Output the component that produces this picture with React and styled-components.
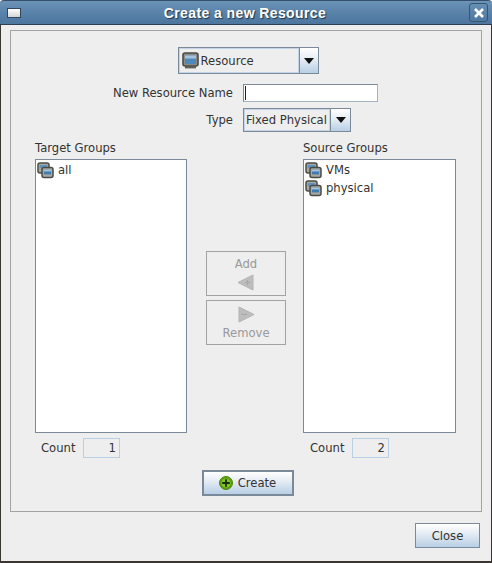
import React from "react"
import styled, { createGlobalStyle } from "styled-components"

const GlobalStyle = createGlobalStyle`
  html, body {
    margin: 0;
    padding: 0;
    background: #eeeeee;
  }
  body {
    font-family: "DejaVu Sans", sans-serif;
    font-size: 11.6px;
    color: #333333;
  }
`
const Window = styled.div`
  width: 492px;
  height: 563px;
  display: flex;
  flex-direction: column;
  background: #eeeeee;
  overflow: hidden;
  border-bottom: 2px solid #3a3733;
  box-sizing: border-box;
`
const TitleBar = styled.div`
  height: 25px;
  flex: none;
  box-sizing: border-box;
  display: flex;
  align-items: center;
  justify-content: space-between;
  padding: 0 4px 0 7px;
  background: linear-gradient(#6c93b8 0%, #5a83aa 50%, #4c769e 100%);
  border-top: 1px solid #35506c;
  border-bottom: 1px solid #2c3e50;
  border-radius: 4px 4px 0 0;
`
const MenuBox = styled.div`
  width: 12px;
  height: 8px;
  background: linear-gradient(#ffffff, #d4d4d4);
  border: 1px solid #2f4860;
`
const Title = styled.div`
  flex: 1;
  text-align: center;
  font-family: "Liberation Sans", Arial, sans-serif;
  font-weight: bold;
  font-size: 14px;
  letter-spacing: 0.4px;
  color: #ffffff;
  text-shadow: 1px 1px 1px #1f3245;
`
const CloseBox = styled.div`
  width: 19px;
  height: 19px;
  border: 1px solid #36556f;
  border-radius: 3px;
  display: flex;
  align-items: center;
  justify-content: center;
  box-sizing: border-box;
`
const Content = styled.div`
  flex: 1;
  display: flex;
  flex-direction: column;
  padding: 5px 9px 0;
  border-left: 1px solid #3a3733;
  border-right: 1px solid #3a3733;
`
const Panel = styled.div`
  height: 482px;
  box-sizing: border-box;
  border: 1px solid #a3a3a3;
  padding: 16px 24px 0;
  display: flex;
  flex-direction: column;
  align-items: stretch;
`
const TopCombo = styled.div`
  align-self: center;
  display: flex;
  width: 141px;
  height: 27px;
  box-sizing: border-box;
  border: 1px solid #7a8a99;
  margin-left: 4px;
`
const ComboValue = styled.div`
  flex: 1;
  display: flex;
  align-items: center;
  gap: 2px;
  padding-left: ${p => p.$pad}px;
  background: #eeeeee;
  border: 1px solid #c2d4e6;
  color: #333333;
  white-space: nowrap;
`
const ComboArrow = styled.div`
  width: ${p => p.$w}px;
  flex: none;
  display: flex;
  align-items: center;
  justify-content: center;
  border-left: 1px solid #7a8a99;
  background: linear-gradient(#ffffff 0%, #e6edf4 45%, #b8cfe5 100%);
`
const FormGrid = styled.div`
  display: grid;
  grid-template-columns: 198px 1fr;
  column-gap: 10px;
  margin-top: 10px;
  align-items: center;
  row-gap: 6px;
`
const FieldLabel = styled.div`
  text-align: right;
  color: #333333;
`
const TextInput = styled.div`
  width: 135px;
  height: 18px;
  box-sizing: border-box;
  background: #ffffff;
  border: 1px solid #a3b3c2;
  border-top-color: #7a8a99;
  border-left-color: #7a8a99;
  display: flex;
  align-items: center;
  padding-left: 1px;
`
const Caret = styled.div`
  width: 1px;
  height: 14px;
  background: #222222;
`
const TypeCombo = styled.div`
  display: flex;
  width: 108px;
  height: 24px;
  box-sizing: border-box;
  border: 1px solid #7a8a99;
`
const Columns = styled.div`
  display: grid;
  grid-template-columns: 152px 1fr 153px;
  margin-top: 8px;
  margin-right: 1px;
`
const GroupColumn = styled.div`
  display: flex;
  flex-direction: column;
`
const GroupLabel = styled.div`
  height: 19px;
  line-height: 16px;
  color: #333333;
`
const ListBox = styled.div`
  height: 274px;
  box-sizing: border-box;
  background: #ffffff;
  border: 1px solid #7a8a99;
  padding: 1px;
`
const ListRow = styled.div`
  height: 18px;
  display: flex;
  align-items: center;
  gap: 4px;
  color: #333333;
`
const CountRow = styled.div`
  display: flex;
  align-items: center;
  margin-top: 5px;
  padding-left: ${p => p.$pad}px;
  height: 20px;
`
const CountLabel = styled.div`
  width: 42px;
`
const CountBox = styled.div`
  width: 37px;
  height: 20px;
  box-sizing: border-box;
  border: 1px solid #b8cfe5;
  text-align: right;
  padding-right: 3px;
  line-height: 18px;
`
const MoveColumn = styled.div`
  display: flex;
  flex-direction: column;
  align-items: center;
  gap: 4px;
  padding-top: 111px;
  padding-left: 2px;
`
const MoveButton = styled.div`
  width: 80px;
  height: 45px;
  box-sizing: border-box;
  border: 1px solid #a3a3a3;
  display: flex;
  flex-direction: column;
  align-items: center;
  justify-content: center;
  gap: 3px;
  color: #999999;
`
const CreateRow = styled.div`
  display: flex;
  justify-content: center;
  margin-top: 12px;
  padding-left: 3px;
`
const CreateButton = styled.div`
  width: 92px;
  height: 26px;
  box-sizing: border-box;
  border: 2px solid #7a8a99;
  display: flex;
  align-items: center;
  justify-content: center;
  gap: 5px;
  background: linear-gradient(#ffffff 0%, #e6edf4 40%, #b8cfe5 100%);
  color: #333333;
`
const Footer = styled.div`
  display: flex;
  justify-content: flex-end;
  margin-top: 11px;
  padding-right: 2px;
`
const CloseButton = styled.div`
  width: 65px;
  height: 25px;
  box-sizing: border-box;
  border: 1px solid #7a8a99;
  display: flex;
  align-items: center;
  justify-content: center;
  background: linear-gradient(#ffffff 0%, #e6edf4 40%, #b8cfe5 100%);
  color: #333333;
`

const CloseGlyph = () => (
  <svg width="12" height="12" viewBox="0 0 12 12">
    <path d="M2 2 L10 10 M10 2 L2 10" stroke="#ffffff" strokeWidth="2.6" />
  </svg>
)

const DownArrow = () => (
  <svg width="12" height="6" viewBox="0 0 12 6">
    <path d="M1 0 H11 L6 6 Z" fill="#111111" />
  </svg>
)

const MonitorIcon = () => (
  <svg width="17" height="17" viewBox="0 0 17 17">
    <rect x="1" y="1" width="15" height="13" rx="2" fill="#8c8c86" stroke="#4a4b45" strokeWidth="1.6" />
    <rect x="3" y="3.5" width="11" height="8.5" fill="#4f88bb" />
    <rect x="3" y="3.5" width="11" height="3" fill="#a5c4dc" />
    <rect x="3" y="14" width="11" height="2.4" fill="#5f5f58" />
  </svg>
)

const GroupIcon = () => (
  <svg width="17" height="17" viewBox="0 0 17 17">
    <rect x="1" y="1" width="11" height="10" rx="2" fill="#a8a8a2" stroke="#4a4b45" strokeWidth="1.5" />
    <rect x="2.8" y="3" width="7.4" height="3" fill="#5f93bf" />
    <rect x="5" y="5.5" width="11" height="10" rx="2" fill="#a8a8a2" stroke="#4a4b45" strokeWidth="1.5" />
    <rect x="7" y="7.8" width="7" height="4.6" fill="#3f7cb0" />
    <rect x="7" y="7.8" width="7" height="1.6" fill="#a9c8e0" />
  </svg>
)

const AddArrow = () => (
  <svg width="18" height="17" viewBox="0 0 18 17">
    <path d="M1 8.5 L16 1 V16 Z" fill="#bdbdbd" stroke="#b4b4b4" strokeLinejoin="round" />
    <path d="M8 8.5 H13 M10.5 6 V11" stroke="#a8a8a8" strokeWidth="1.2" />
  </svg>
)

const RemoveArrow = () => (
  <svg width="18" height="17" viewBox="0 0 18 17">
    <path d="M17 8.5 L2 1 V16 Z" fill="#bdbdbd" stroke="#b4b4b4" strokeLinejoin="round" />
    <path d="M4.5 8.5 H10" stroke="#a8a8a8" strokeWidth="1.2" />
  </svg>
)

const PlusIcon = () => (
  <svg width="14" height="14" viewBox="0 0 14 14">
    <circle cx="7" cy="7" r="6.5" fill="#5f9e12" stroke="#4a8a0c" />
    <circle cx="7" cy="7" r="4.6" fill="#86c51f" />
    <path d="M7 3.2 V10.8 M3.2 7 H10.8" stroke="#16300a" strokeWidth="1.8" />
  </svg>
)

const Group = ({ label, items, count, countPad }) => (
  <GroupColumn>
    <GroupLabel>{label}</GroupLabel>
    <ListBox>
      {items.map(item => (
        <ListRow key={item}>
          <GroupIcon />
          {item}
        </ListRow>
      ))}
    </ListBox>
    <CountRow $pad={countPad}>
      <CountLabel>Count</CountLabel>
      <CountBox>{count}</CountBox>
    </CountRow>
  </GroupColumn>
)

const App = () => (
  <Window>
    <GlobalStyle />
    <TitleBar>
      <MenuBox />
      <Title>Create a new Resource</Title>
      <CloseBox><CloseGlyph /></CloseBox>
    </TitleBar>
    <Content>
      <Panel>
        <TopCombo>
          <ComboValue $pad={2}>
            <MonitorIcon />
            Resource
          </ComboValue>
          <ComboArrow $w={18}><DownArrow /></ComboArrow>
        </TopCombo>
        <FormGrid>
          <FieldLabel>New Resource Name</FieldLabel>
          <TextInput><Caret /></TextInput>
          <FieldLabel>Type</FieldLabel>
          <TypeCombo>
            <ComboValue $pad={1}>Fixed Physical</ComboValue>
            <ComboArrow $w={19}><DownArrow /></ComboArrow>
          </TypeCombo>
        </FormGrid>
        <Columns>
          <Group label="Target Groups" items={["all"]} count="1" countPad={6} />
          <MoveColumn>
            <MoveButton>
              Add
              <AddArrow />
            </MoveButton>
            <MoveButton>
              <RemoveArrow />
              Remove
            </MoveButton>
          </MoveColumn>
          <Group label="Source Groups" items={["VMs", "physical"]} count="2" countPad={7} />
        </Columns>
        <CreateRow>
          <CreateButton>
            <PlusIcon />
            Create
          </CreateButton>
        </CreateRow>
      </Panel>
      <Footer>
        <CloseButton>Close</CloseButton>
      </Footer>
    </Content>
  </Window>
)

export default App
